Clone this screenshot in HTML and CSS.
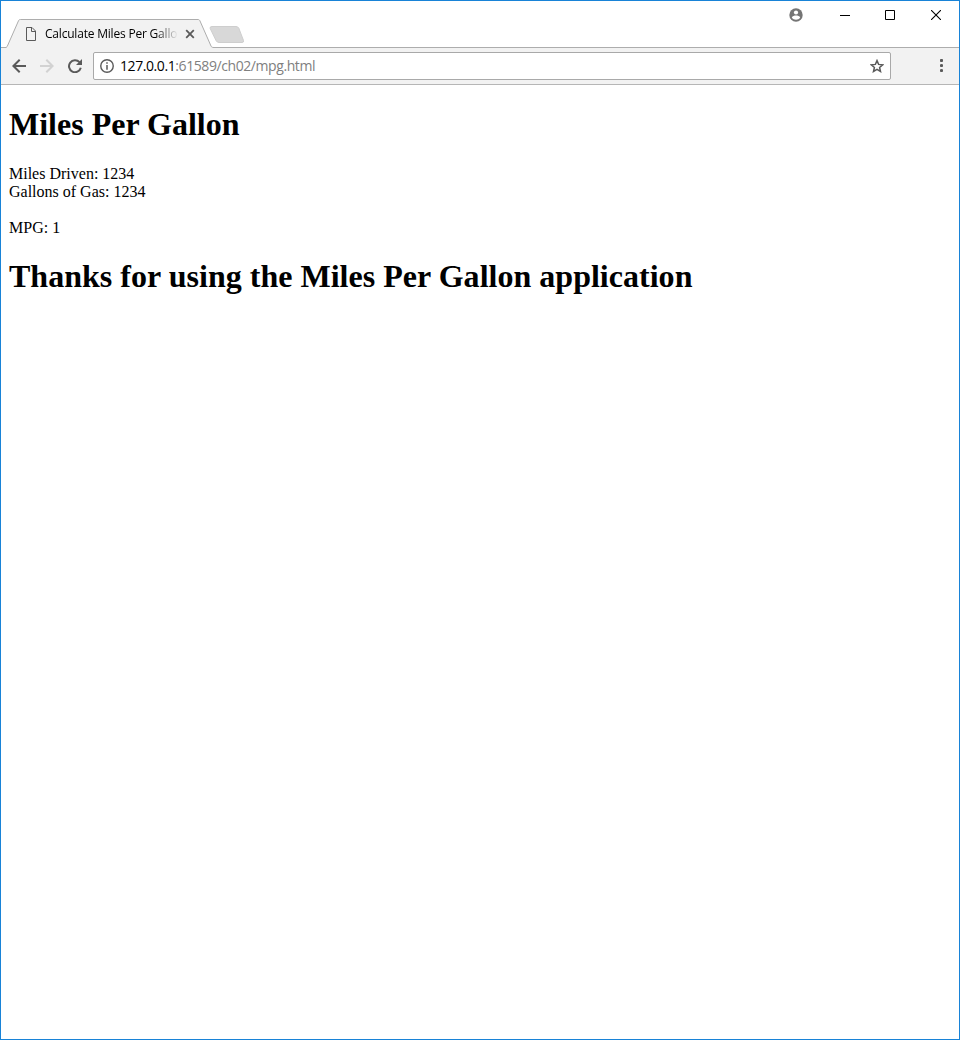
FILE: index.html
```html
<!DOCTYPE html>
<html lang="en">
<head>
<meta charset="utf-8">
<title>Calculate Miles Per Gallon</title>
<link rel="stylesheet" href="styles.css">
</head>
<body>
<div class="window">
  <header class="titlebar">
    <div class="tab">
      <svg class="tab-shape" width="208" height="29" viewBox="0 0 208 29">
        <path d="M-1 28.500C.4 28.500 1 28 1.400 27L12.400 2C13 .700 13.500 .5 14.500 .5H192C193 .5 193.500 .900 194 2L205 27C205.500 28 206 28.500 208 28.500V29H-1Z" fill="#f2f2f2"/>
        <path d="M-1 28.500C.4 28.500 1 28 1.400 27L12.400 2C13 .700 13.500 .5 14.500 .5H192C193 .5 193.500 .900 194 2L205 27C205.500 28 206 28.500 208 28.500" fill="none" stroke="#adadad"/>
      </svg>
      <svg class="tab-page" width="10" height="14" viewBox="0 0 10 14" fill="none" stroke="#5a5a5a">
        <path d="M.5.5H6L9.500 4V13.500H.5ZM5.500.5V4.500H9.500"/>
      </svg>
      <span class="tab-title">Calculate Miles Per Gallon</span>
      <svg class="tab-close" width="10" height="10" viewBox="0 0 10 10" stroke="#5a5a5a" stroke-width="1.800">
        <path d="M1.200 1.200L8.800 8.800M8.800 1.200L1.200 8.800"/>
      </svg>
    </div>
    <svg class="new-tab" width="36" height="19" viewBox="0 0 36 19">
      <path d="M3 1.500H27Q29 1.500 29.800 3.200L34.500 15.500Q35 17.500 33 17.500H10Q8 17.500 7 15.500L1.200 3.500Q.5 1.500 3 1.500Z" fill="#d8d8d8" stroke="#cecece"/>
    </svg>
    <div class="controls">
      <svg class="profile" width="14" height="14" viewBox="0 0 14 14">
        <circle cx="7" cy="7" r="6.700" fill="#757575"/>
        <circle cx="7" cy="4.500" r="2.100" fill="#fff"/>
        <path d="M2.800 9.800C3.200 8 5.500 7.600 7 7.600S10.800 8 11.200 9.800C9.400 12.400 4.600 12.400 2.800 9.800Z" fill="#fff"/>
      </svg>
      <svg class="minimize" width="10" height="10" viewBox="0 0 10 10"><path d="M0 5.500H10" stroke="#000"/></svg>
      <svg class="maximize" width="10" height="10" viewBox="0 0 10 10"><path d="M.5.5H9.500V9.500H.5Z" fill="none" stroke="#000"/></svg>
      <svg class="close" width="10" height="10" viewBox="0 0 10 10"><path d="M0 0L10 10M10 0L0 10" stroke="#000" stroke-width="1.100"/></svg>
    </div>
  </header>
  <nav class="toolbar">
    <svg class="back" width="14" height="14" viewBox="0 0 14 14" fill="none" stroke="#5a5a5a" stroke-width="2"><path d="M14 7H1.500M7.700.7L1.400 7L7.700 13.300"/></svg>
    <svg class="forward" width="14" height="14" viewBox="0 0 14 14" fill="none" stroke="#d2d2d2" stroke-width="2"><path d="M0 7H12.500M6.300.7L12.600 7L6.300 13.300"/></svg>
    <svg class="reload" width="14" height="14" viewBox="0 0 14 14"><path d="M11.500 3.200A6 6 0 1 0 12.800 8.800" fill="none" stroke="#5a5a5a" stroke-width="2"/><path d="M14 0V6H8Z" fill="#5a5a5a"/></svg>
    <div class="omnibox">
      <svg class="info" width="14" height="14" viewBox="0 0 14 14"><circle cx="7" cy="7" r="6.250" fill="none" stroke="#5a5a5a" stroke-width="1.400"/><path d="M6.250 3.300H7.750V4.800H6.250ZM6.250 6H7.750V10.700H6.250Z" fill="#5a5a5a"/></svg>
      <span class="url"><span class="host">127.0.0.1</span>:61589/ch02/mpg.html</span>
      <svg class="star" width="14" height="14" viewBox="0 0 14 14"><path d="M7 1.600L8.600 5.400L12.700 5.800L9.600 8.500L10.500 12.500L7 10.400L3.500 12.500L4.400 8.500L1.300 5.800L5.400 5.400Z" fill="none" stroke="#5a5a5a" stroke-width="1.500"/></svg>
    </div>
    <svg class="menu" width="3" height="13" viewBox="0 0 3 13" fill="#5a5a5a"><circle cx="1.500" cy="1.500" r="1.600"/><circle cx="1.500" cy="6.500" r="1.600"/><circle cx="1.500" cy="11.500" r="1.600"/></svg>
  </nav>
  <main class="page">
    <h1 class="heading">Miles Per Gallon</h1>
    <p class="results">Miles Driven: 1234<br>Gallons of Gas: 1234<br><br>MPG: 1</p>
    <h1 class="heading closing">Thanks for using the Miles Per Gallon application</h1>
  </main>
</div>
</body>
</html>
```
FILE: styles.css
```css
* {
  box-sizing: border-box;
}

body {
  margin: 0;
  background: #fff;
}

svg {
  display: block;
  flex: none;
}

.window {
  display: flex;
  flex-direction: column;
  height: 1040px;
  border: 1px solid #1883d7;
  background: #fff;
}

.titlebar {
  display: flex;
  align-items: flex-end;
  height: 47px;
  padding-left: 5px;
  background: linear-gradient(#adadad, #adadad) bottom / 100% 1px no-repeat;
}

.tab {
  position: relative;
  display: flex;
  align-items: center;
  width: 208px;
  height: 29px;
  padding-left: 20px;
  background: linear-gradient(#f2f2f2, #f2f2f2) bottom / 205px 1px no-repeat;
}

.tab-shape {
  position: absolute;
  left: 0;
  top: 0;
}

.tab-page,
.tab-title,
.tab-close {
  position: relative;
}

.tab-title {
  width: 133px;
  margin-left: 9px;
  overflow: hidden;
  white-space: nowrap;
  font: 12px/18px "Open Sans", "Noto Sans", sans-serif;
  letter-spacing: -0.2px;
  color: #000;
  -webkit-mask-image: linear-gradient(90deg, #000 110px, transparent 133px);
  mask-image: linear-gradient(90deg, #000 110px, transparent 133px);
}

.tab-close {
  margin-left: 7px;
}

.new-tab {
  margin: 0 0 4px -5px;
}

.controls {
  display: flex;
  align-items: center;
  height: 28px;
  margin: 0 18px 19px auto;
}

.minimize {
  margin-left: 37px;
}

.maximize {
  margin-left: 35px;
}

.close {
  margin-left: 36px;
}

.toolbar {
  display: flex;
  align-items: center;
  height: 37px;
  padding: 0 16px 1px 11px;
  border-bottom: 1px solid #b6b6b6;
  background: #f2f2f2;
}

.forward {
  margin-left: 14px;
}

.reload {
  margin-left: 14px;
}

.omnibox {
  display: flex;
  align-items: center;
  width: 798px;
  height: 28px;
  margin-left: 11px;
  padding: 0 6px;
  border: 1px solid #a9a9a9;
  border-radius: 2px;
  background: #fff;
}

.url {
  margin-left: 6px;
  font: 14px/20px "Open Sans", "Noto Sans", sans-serif;
  letter-spacing: -0.42px;
  color: #808080;
}

.host {
  color: #000;
}

.star {
  margin-left: auto;
}

.menu {
  margin-left: auto;
}

.page {
  flex: 1;
  padding: 0 8px;
  font: 16px/18px "Liberation Serif", "Times New Roman", serif;
  color: #000;
}

.heading {
  margin: 21px 0 22px;
  font-size: 32px;
  line-height: 37px;
}

.closing {
  letter-spacing: 0.02px;
}

.results {
  margin: 0;
}
```
